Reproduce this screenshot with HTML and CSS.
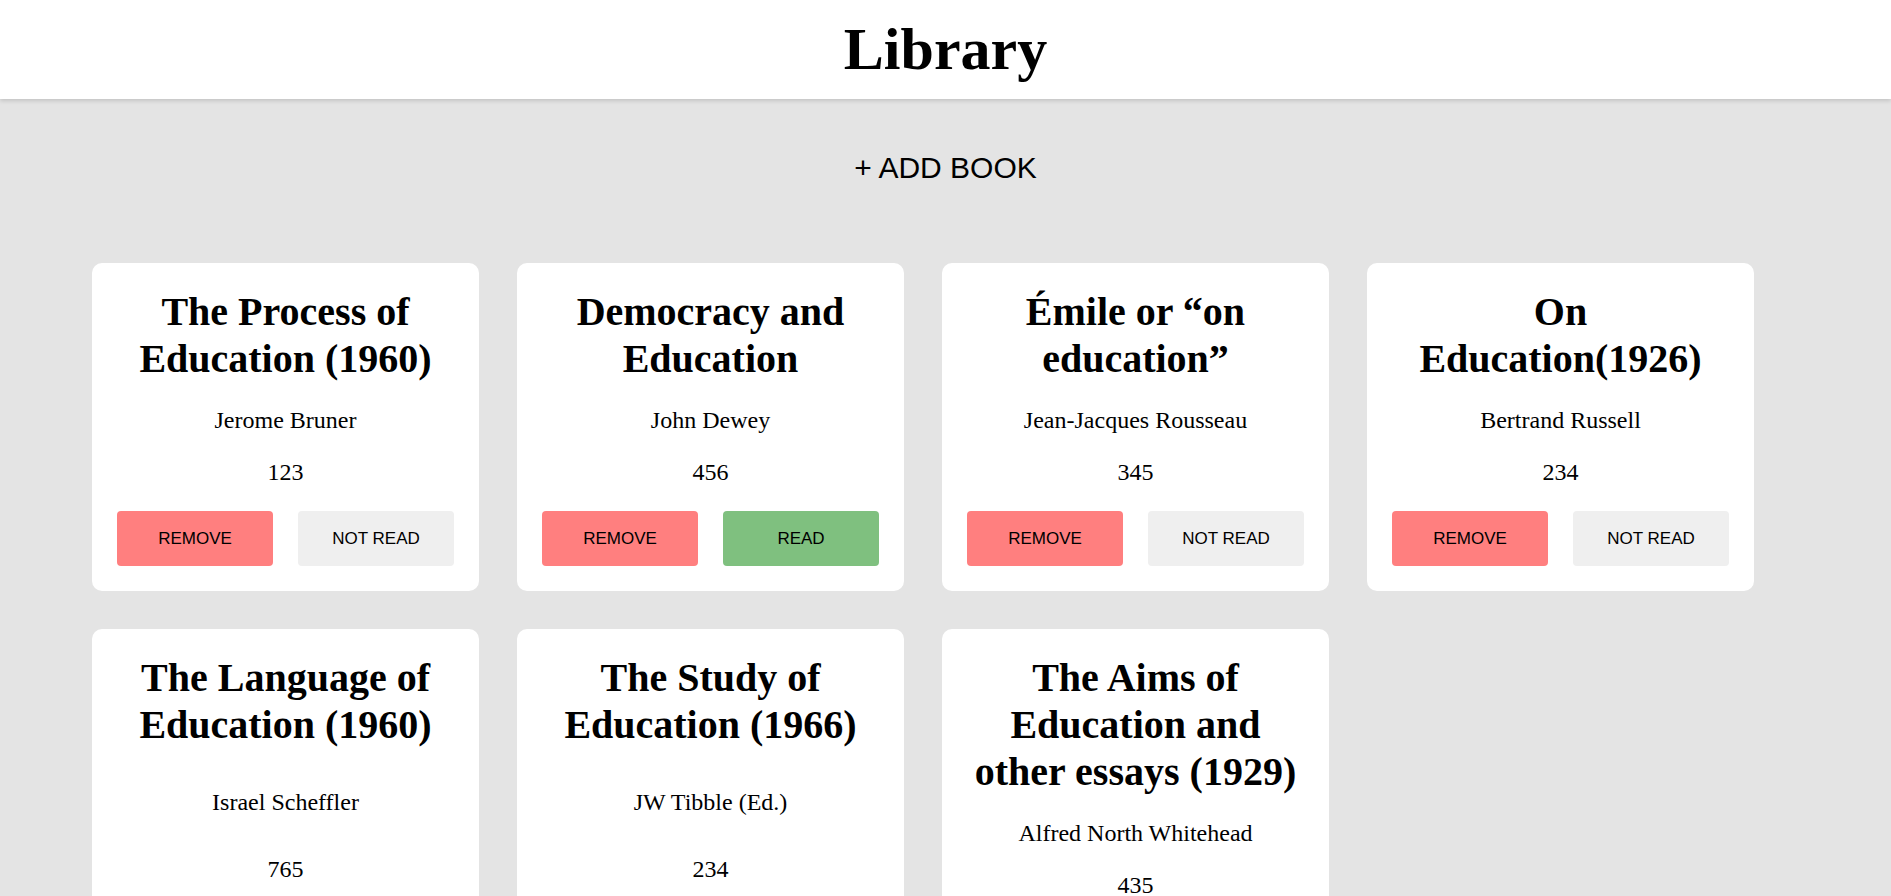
FILE: index.html
```html
<!DOCTYPE html>
<html lang="en">
<head>
<meta charset="utf-8">
<title>Library</title>
<link rel="stylesheet" href="styles.css">
</head>
<body>
<header class="site-header">
  <h1 class="site-title">Library</h1>
</header>
<main class="main">
  <button class="add-btn" type="button">+ ADD BOOK</button>
  <section class="library">
    <article class="card">
      <h2 class="card-title">The Process of Education (1960)</h2>
      <p class="card-author">Jerome Bruner</p>
      <p class="card-pages">123</p>
      <div class="card-actions">
        <button class="btn btn-remove" type="button">REMOVE</button>
        <button class="btn btn-notread" type="button">NOT READ</button>
      </div>
    </article>
    <article class="card">
      <h2 class="card-title">Democracy and Education</h2>
      <p class="card-author">John Dewey</p>
      <p class="card-pages">456</p>
      <div class="card-actions">
        <button class="btn btn-remove" type="button">REMOVE</button>
        <button class="btn btn-read" type="button">READ</button>
      </div>
    </article>
    <article class="card">
      <h2 class="card-title">Émile or “on education”</h2>
      <p class="card-author">Jean-Jacques Rousseau</p>
      <p class="card-pages">345</p>
      <div class="card-actions">
        <button class="btn btn-remove" type="button">REMOVE</button>
        <button class="btn btn-notread" type="button">NOT READ</button>
      </div>
    </article>
    <article class="card">
      <h2 class="card-title">On Education(1926)</h2>
      <p class="card-author">Bertrand Russell</p>
      <p class="card-pages">234</p>
      <div class="card-actions">
        <button class="btn btn-remove" type="button">REMOVE</button>
        <button class="btn btn-notread" type="button">NOT READ</button>
      </div>
    </article>
    <article class="card">
      <h2 class="card-title">The Language of Education (1960)</h2>
      <p class="card-author">Israel Scheffler</p>
      <p class="card-pages">765</p>
      <div class="card-actions">
        <button class="btn btn-remove" type="button">REMOVE</button>
        <button class="btn btn-notread" type="button">NOT READ</button>
      </div>
    </article>
    <article class="card">
      <h2 class="card-title">The Study of Education (1966)</h2>
      <p class="card-author">JW Tibble (Ed.)</p>
      <p class="card-pages">234</p>
      <div class="card-actions">
        <button class="btn btn-remove" type="button">REMOVE</button>
        <button class="btn btn-notread" type="button">NOT READ</button>
      </div>
    </article>
    <article class="card">
      <h2 class="card-title">The Aims of Education and other essays (1929)</h2>
      <p class="card-author">Alfred North Whitehead</p>
      <p class="card-pages">435</p>
      <div class="card-actions">
        <button class="btn btn-remove" type="button">REMOVE</button>
        <button class="btn btn-notread" type="button">NOT READ</button>
      </div>
    </article>
  </section>
</main>
</body>
</html>
```
FILE: styles.css
```css
* {
  box-sizing: border-box;
}

html, body {
  margin: 0;
  padding: 0;
}

body {
  background: #e4e4e4;
  color: #000;
  font-family: "Liberation Serif", "Times New Roman", serif;
  min-height: 100vh;
}

.site-header {
  background: #fff;
  box-shadow: 0 2px 4px rgba(0, 0, 0, 0.14);
  padding: 15px 0;
  text-align: center;
  position: relative;
  z-index: 1;
}

.site-title {
  margin: 0;
  font-size: 60px;
  font-weight: bold;
  line-height: normal;
}

.main {
  padding: 42px 92px 40px;
}

.add-btn {
  display: block;
  margin: 0 auto;
  padding: 10px 20px;
  background: none;
  border: none;
  color: #000;
  font-family: "Liberation Sans", Arial, sans-serif;
  font-size: 30px;
  line-height: normal;
  cursor: pointer;
}

.library {
  margin-top: 68px;
  display: grid;
  grid-template-columns: repeat(4, 387px);
  gap: 38px;
}

.card {
  background: #fff;
  border-radius: 10px;
  padding: 25px;
  display: flex;
  flex-direction: column;
  justify-content: space-between;
  gap: 25px;
  text-align: center;
}

.card-title {
  margin: 0;
  font-size: 40px;
  font-weight: bold;
  line-height: normal;
}

.card-author,
.card-pages {
  margin: 0;
  font-size: 24px;
  line-height: normal;
}

.card-actions {
  display: grid;
  grid-template-columns: 1fr 1fr;
  gap: 25px;
}

.btn {
  height: 55px;
  border: none;
  border-radius: 4px;
  color: #000;
  font-family: "Liberation Sans", Arial, sans-serif;
  font-size: 17px;
  cursor: pointer;
}

.btn-remove {
  background: #ff7f7f;
}

.btn-read {
  background: #7fc07f;
}

.btn-notread {
  background: #efefef;
}
```
